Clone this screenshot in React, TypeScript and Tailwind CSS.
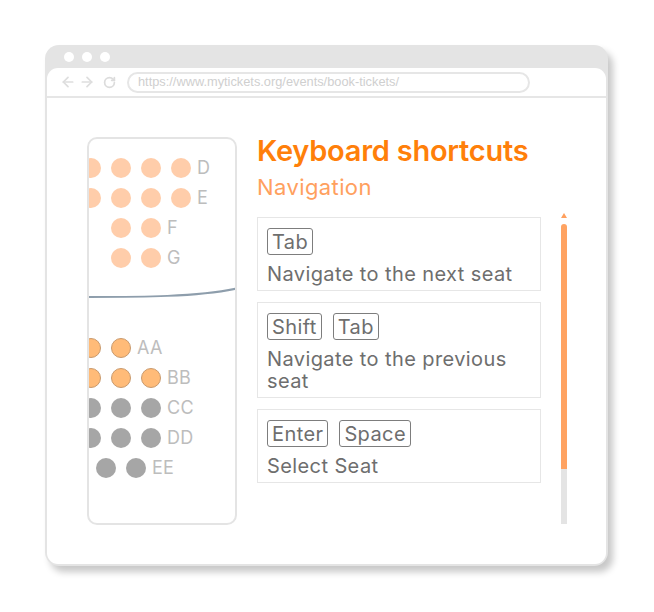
import { ArrowLeft, ArrowRight, RotateCw } from 'lucide-react'

type SeatKind = 'peach' | 'picked' | 'taken'

const seatClass: Record<SeatKind, string> = {
  peach: 'bg-[#ffcdaa]',
  picked: 'bg-[#ffbb78] border-[1.5px] border-[#c99a6d]',
  taken: 'bg-[#a6a6a6]',
}

function SeatRow({ label, count, kind, offset }: { label: string; count: number; kind: SeatKind; offset: string }) {
  return (
    <div className={`flex h-[30px] items-center ${offset}`}>
      <div className="flex gap-[10px]">
        {Array.from({ length: count }).map((_, i) => (
          <div key={i} className={`h-[20px] w-[20px] shrink-0 rounded-full ${seatClass[kind]}`} />
        ))}
      </div>
      <span className="ml-[6px] text-[18px] leading-none tracking-[0.3px] text-[#bdbdbd]">{label}</span>
    </div>
  )
}

function Key({ children }: { children: string }) {
  return (
    <span className="inline-flex h-[27px] items-center rounded-[3px] border border-[#7d7d7d] px-[4px] text-[20px] leading-none tracking-[0.4px] text-[#6e6e6e]">
      {children}
    </span>
  )
}

function Shortcut({ keys, text }: { keys: string[]; text: string }) {
  return (
    <div className="border-[1.5px] border-[#e6e6e6] px-[9px] pt-[10px] pb-[5px]">
      <div className="flex gap-[11px]">
        {keys.map((k) => (
          <Key key={k}>{k}</Key>
        ))}
      </div>
      <p className="mt-[8px] text-[20px] leading-[22px] tracking-[0.4px] text-[#6e6e6e]">{text}</p>
    </div>
  )
}

export default function App() {
  return (
    <div className="h-[612px] w-[654px] bg-white pt-[45px] pl-[45px]" style={{ fontFamily: 'Inter, "Noto Sans", sans-serif' }}>
      <div className="flex h-[521px] w-[563px] flex-col rounded-[14px] bg-[#e4e4e4] px-[2px] pb-[2px] shadow-[5px_6px_7px_rgba(0,0,0,0.22)]">
        {/* title bar */}
        <div className="flex h-[23px] shrink-0 items-center gap-[8px] pl-[17px] pt-[1px]">
          <span className="h-[10px] w-[10px] rounded-full bg-white" />
          <span className="h-[10px] w-[10px] rounded-full bg-white" />
          <span className="h-[10px] w-[10px] rounded-full bg-white" />
        </div>

        <div className="flex flex-1 flex-col rounded-[11px] bg-white">
          {/* address bar */}
          <div className="flex h-[30px] shrink-0 items-center border-b-2 border-[#e6e6e6] pl-[13px]">
            <ArrowLeft size={16} strokeWidth={2.6} className="text-[#dedede]" />
            <ArrowRight size={16} strokeWidth={2.6} className="ml-[3px] text-[#dedede]" />
            <RotateCw size={13} strokeWidth={3.2} className="ml-[8px] text-[#dcdcdc]" />
            <div className="ml-[11px] flex h-[21px] w-[403px] items-center rounded-full border-2 border-[#e6e6e6] pl-[9px] text-[12.8px] text-[#cfcfcf]" style={{ fontFamily: '"Liberation Sans", sans-serif' }}>
              https://www.mytickets.org/events/book-tickets/
            </div>
          </div>

          <div className="flex pl-[40px] pt-[39px]">
            {/* seat map */}
            <div className="h-[388px] w-[150px] shrink-0 overflow-hidden rounded-[10px] border-2 border-[#e4e4e4] pt-[14px]">
              <SeatRow label="D" count={4} kind="peach" offset="-ml-[8px]" />
              <SeatRow label="E" count={4} kind="peach" offset="-ml-[8px]" />
              <SeatRow label="F" count={2} kind="peach" offset="ml-[22px]" />
              <SeatRow label="G" count={2} kind="peach" offset="ml-[22px]" />
              <svg width="150" height="60" viewBox="0 0 150 60" className="block">
                <path d="M-2 24 C 50 24, 110 24, 150 15" fill="none" stroke="#8e9eac" strokeWidth="2" />
              </svg>
              <SeatRow label="AA" count={2} kind="picked" offset="-ml-[8px]" />
              <SeatRow label="BB" count={3} kind="picked" offset="-ml-[8px]" />
              <SeatRow label="CC" count={3} kind="taken" offset="-ml-[8px]" />
              <SeatRow label="DD" count={3} kind="taken" offset="-ml-[8px]" />
              <SeatRow label="EE" count={2} kind="taken" offset="ml-[7px]" />
            </div>

            {/* shortcuts panel */}
            <div className="ml-[20px] w-[284px] shrink-0">
              <h1 className="-mt-[4px] text-[29px] font-semibold leading-[36px] tracking-[-0.25px] text-[#ff7f0a]">Keyboard shortcuts</h1>
              <h2 className="mt-[4px] text-[22px] leading-[28px] tracking-[0.4px] text-[#ffa05e]">Navigation</h2>
              <div className="mt-[16px] flex flex-col gap-[11px]">
                <Shortcut keys={['Tab']} text="Navigate to the next seat" />
                <Shortcut keys={['Shift', 'Tab']} text="Navigate to the previous seat" />
                <Shortcut keys={['Enter', 'Space']} text="Select Seat" />
              </div>
            </div>

            {/* scrollbar */}
            <div className="ml-[20px] mt-[76px] flex w-[6px] flex-col items-center">
              <span className="h-0 w-0 border-x-[3px] border-b-[5px] border-x-transparent border-b-[#ffa05e]" />
              <div className="mt-[6px] h-[245px] w-[6px] rounded-t-[3px] bg-[#ffa362]" />
              <div className="h-[55px] w-[6px] bg-[#e4e4e4]" />
            </div>
          </div>
        </div>
      </div>
    </div>
  )
}
